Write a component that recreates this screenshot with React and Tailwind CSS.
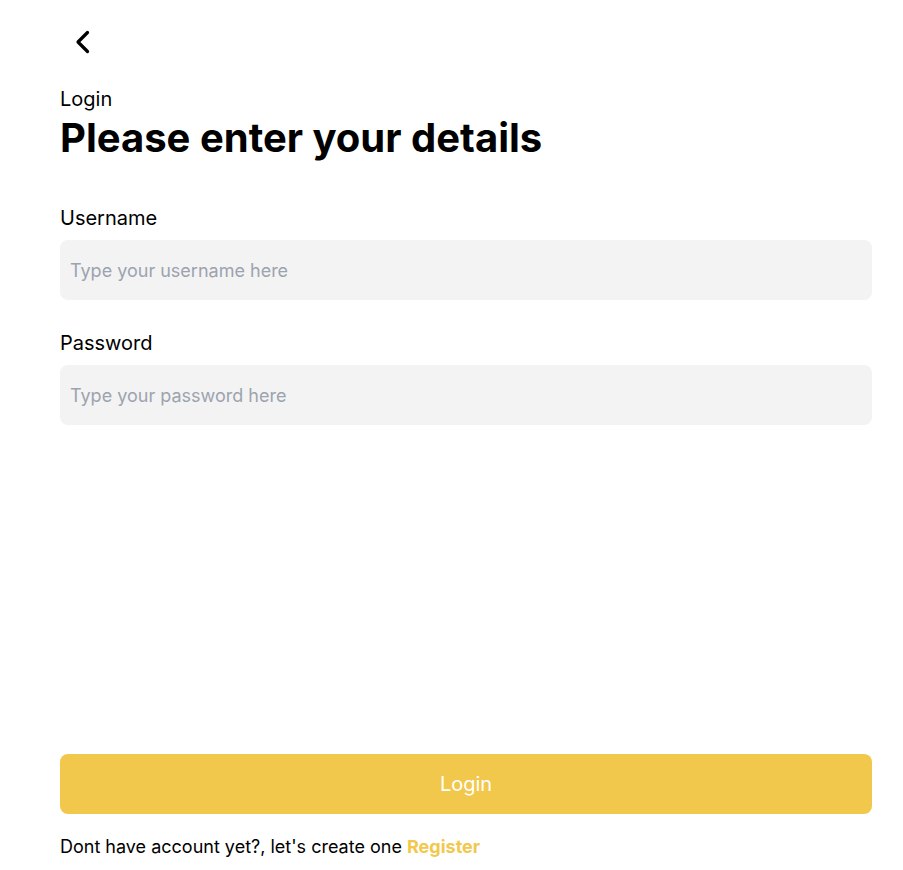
import React, { useState } from 'react';

const font = { fontFamily: 'Inter, "Noto Sans", sans-serif' };

const Field = ({ label, type, placeholder, value, onChange }) => (
  <div className="flex flex-col">
    <label className="text-[20px] leading-[28px] text-black mb-[8px]">{label}</label>
    <input
      type={type}
      value={value}
      onChange={onChange}
      placeholder={placeholder}
      className="h-[60px] w-full rounded-[8px] bg-[#f3f3f3] px-[10px] text-[18px] text-black outline-none placeholder:text-[#9ca3af]"
    />
  </div>
);

const App = () => {
  const [username, setUsername] = useState('');
  const [password, setPassword] = useState('');

  return (
    <div className="min-h-[870px] bg-white flex flex-col pl-[60px] pr-[31px]" style={font}>
      <button className="mt-[30px] ml-[12px] w-[24px] h-[24px] flex items-center justify-center">
        <svg width="24" height="24" viewBox="0 0 24 24" fill="none" stroke="black" strokeWidth="3.2" strokeLinecap="round" strokeLinejoin="round">
          <path d="M15.5 2.5 L6 12 L15.5 21.5" />
        </svg>
      </button>

      <p className="mt-[31px] text-[20px] leading-[28px] text-black">Login</p>
      <h1 className="text-[40px] leading-[50px] font-bold text-black">Please enter your details</h1>

      <div className="mt-[41px] flex flex-col gap-[29px]">
        <Field label="Username" type="text" placeholder="Type your username here" value={username} onChange={e => setUsername(e.target.value)} />
        <Field label="Password" type="password" placeholder="Type your password here" value={password} onChange={e => setPassword(e.target.value)} />
      </div>

      <div className="mt-auto pb-[10px]">
        <button className="h-[60px] w-full rounded-[8px] bg-[#f2c84c] text-white text-[20px]">Login</button>
        <p className="mt-[20px] text-[18px] leading-[26px] text-black">
          Dont have account yet?, let's create one <span className="font-bold text-[#f2c84c]">Register</span>
        </p>
      </div>
    </div>
  );
};

export default App;
